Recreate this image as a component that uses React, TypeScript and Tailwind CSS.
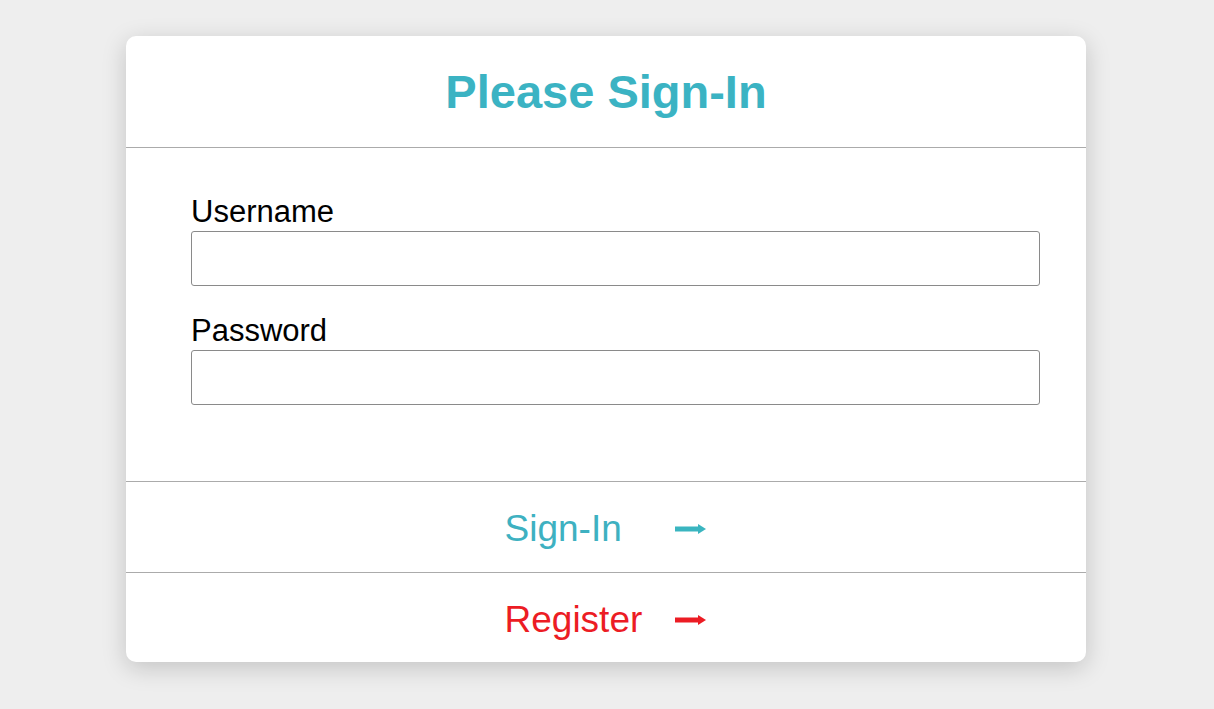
import { useState } from 'react';

function Arrow({ color }: { color: string }) {
  return (
    <svg width="31" height="10" viewBox="0 0 31 10" className="block">
      <rect x="0" y="2.5" width="25" height="5" fill={color} />
      <polygon points="23,0 31,5 23,10" fill={color} />
    </svg>
  );
}

export default function App() {
  const [username, setUsername] = useState('');
  const [password, setPassword] = useState('');

  return (
    <div
      className="min-h-[709px] bg-[#eeeeee] pt-[36px]"
      style={{ fontFamily: '"Liberation Sans", Arial, sans-serif' }}
    >
      <div className="ml-[126px] w-[960px] rounded-[10px] bg-white shadow-[0_6px_24px_rgba(0,0,0,0.18)]">
        {/* header */}
        <div className="flex h-[112px] items-center justify-center border-b border-[#ababab] pt-[1px]">
          <h1 className="text-[47px] font-bold text-[#3bb3c3]">Please Sign-In</h1>
        </div>

        {/* form */}
        <div className="border-b border-[#ababab] pl-[65px] pr-[46px] pt-[46px] pb-[76px]">
          <label className="block text-[31px] leading-[36px] text-black">Username</label>
          <input
            value={username}
            onChange={e => setUsername(e.target.value)}
            className="mt-px block h-[55px] w-full rounded-[3px] border border-[#8a8a8a] px-3 text-[24px] outline-none"
          />
          <label className="mt-[27px] block text-[31px] leading-[36px] text-black">Password</label>
          <input
            type="password"
            value={password}
            onChange={e => setPassword(e.target.value)}
            className="mt-px block h-[55px] w-full rounded-[3px] border border-[#8a8a8a] px-3 text-[24px] outline-none"
          />
        </div>

        {/* actions */}
        <button className="flex h-[91px] w-full items-center justify-center border-b border-[#ababab] pt-[4px] pr-[2px]">
          <span className="w-[170px] text-left text-[37px] text-[#3eb1c1]">Sign-In</span>
          <Arrow color="#3ab5c0" />
        </button>
        <button className="flex h-[89px] w-full items-center justify-center pt-[4px] pr-[2px]">
          <span className="w-[170px] text-left text-[37px] text-[#ec1c24]">Register</span>
          <Arrow color="#ec1c24" />
        </button>
      </div>
    </div>
  );
}
